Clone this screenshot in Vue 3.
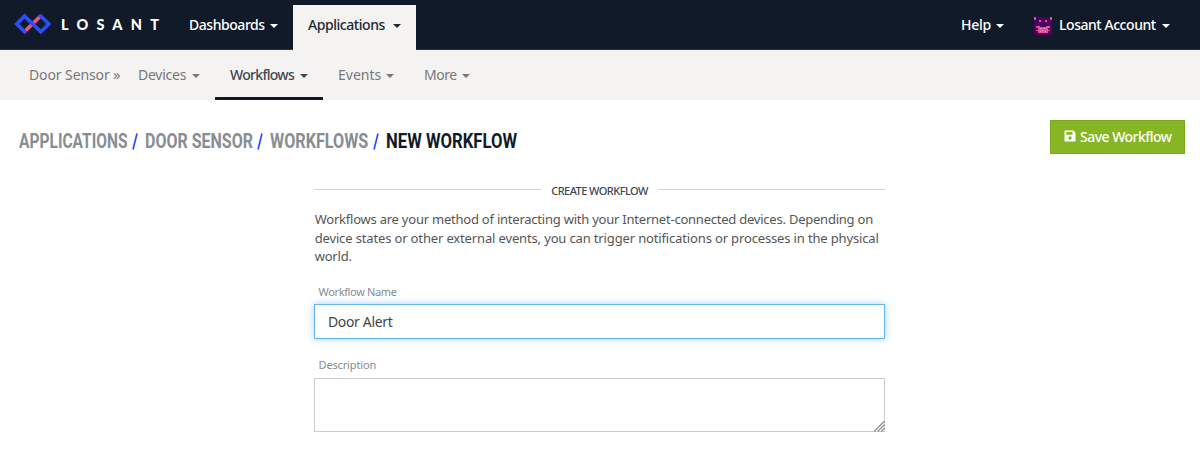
<script setup>
import { ref } from 'vue'

const name = ref('Door Alert')
const description = ref('')
const crumbs = [
  { label: 'Applications', width: 108, scale: 0.777 },
  { label: 'Door Sensor', width: 107, scale: 0.8 },
  { label: 'Workflows', width: 98, scale: 0.808 },
]
</script>

<template>
  <div class="page">
    <header class="navbar">
      <a class="brand">
        <svg class="mark" width="38" height="22" viewBox="0 0 38 22" fill="none" stroke-width="3.7">
          <path d="M10.5 18.8 26.8 2.8" stroke="#ee5384" />
          <path d="M12 20 2.8 11 10.5 3.2 26.8 18.8 34.8 11 25.6 2" stroke="#2b4bfc" stroke-linejoin="miter" />
        </svg>
        <span class="wordmark">LOSANT</span>
      </a>
      <nav class="main-nav">
        <a class="item dashboards"><span>Dashboards</span><i class="caret"></i></a>
        <a class="item applications"><span>Applications</span><i class="caret"></i></a>
      </nav>
      <nav class="main-nav right">
        <a class="item help"><span>Help</span><i class="caret"></i></a>
        <a class="item account">
          <svg class="avatar" width="18" height="18" viewBox="0 0 18 18" shape-rendering="crispEdges">
            <path fill="#4d0060" d="M0 0h18v18H0z" />
            <path fill="#e5528b" d="M0 0h2v3H0zM16 0h2v3h-2zM5 3h2v2H5zM11 3h2v2h-2zM2 9h4v1h6V9h4v2h-1v2h1v1h-2v2H4v-2H2v-1h2v-2H2z" />
            <path fill="#4d0060" d="M3 11h1v2H3zM14 11h1v2h-1z" />
            <path fill="#d8a3e6" d="M6 11h1v1H6zM10 11h1v1h-1zM8 13h1v1H8zM11 14h1v1h-1zM6 14h1v1H6z" />
          </svg>
          <span>Losant Account</span><i class="caret"></i>
        </a>
      </nav>
    </header>

    <nav class="subnav">
      <span class="context">Door Sensor »</span>
      <a class="sub devices"><span>Devices</span><i class="caret"></i></a>
      <a class="sub workflows"><span>Workflows</span><i class="caret"></i></a>
      <a class="sub events"><span>Events</span><i class="caret"></i></a>
      <a class="sub more"><span>More</span><i class="caret"></i></a>
    </nav>

    <div class="title-row">
      <h1 class="crumbs">
        <template v-for="c in crumbs" :key="c.label">
          <a class="crumb" :style="{ width: c.width + 'px' }"><span :style="{ transform: `scaleX(${c.scale})` }">{{ c.label }}</span></a>
          <svg class="slash" width="6" height="17" viewBox="0 0 6 17"><path d="M5 .5 1 16.5" stroke="#2b4bfc" stroke-width="1.7" /></svg>
        </template>
        <span class="crumb current"><span>New Workflow</span></span>
      </h1>
      <button class="save">
        <svg width="12" height="12" viewBox="0 0 12 12">
          <path fill="#fff" fill-rule="evenodd" d="M1.5.5h7.8L11.5 2.700v7.800a1 1 0 0 1-1 1h-9a1 1 0 0 1-1-1v-9a1 1 0 0 1 1-1zM2.300 2v2.700h6.200V2zM6 6.300a1.700 1.700 0 1 0 0 3.400 1.700 1.700 0 0 0 0-3.400z" />
        </svg>
        <span>Save Workflow</span>
      </button>
    </div>

    <form class="form">
      <h2 class="legend"><span>CREATE WORKFLOW</span></h2>
      <p class="intro">
        <span class="l1">Workflows are your method of interacting with your Internet-connected devices. Depending on</span><br>
        <span class="l2">device states or other external events, you can trigger notifications or processes in the physical</span><br>
        <span>world.</span>
      </p>
      <label for="name">Workflow Name</label>
      <input id="name" v-model="name" type="text">
      <label for="description" class="second">Description</label>
      <div class="area">
        <textarea id="description" v-model="description"></textarea>
        <svg class="grip" width="12" height="12" viewBox="0 0 12 12"><path d="M1 11.500 11.500 1M4.500 11.500l7-7M8 11.500l3.500-3.500" stroke="#8c8c8c" stroke-width="1.100" /></svg>
      </div>
    </form>
  </div>
</template>

<style>
body { background: #fff; }
</style>

<style scoped>
* { box-sizing: border-box; }
.page { width: 1200px; height: 470px; overflow: hidden; background: #fff; font-family: "Noto Sans", sans-serif; font-size: 14px; color: #555; }
.navbar { display: flex; height: 50px; background: #101a28; border-bottom: 1px solid #2b3440; color: #fff; }
.brand { display: flex; width: 174px; padding-left: 14px; }
.mark { margin-top: 13px; flex: none; }
.wordmark { margin-left: 9px; font: 900 14.5px/49px Lato, sans-serif; letter-spacing: 8.2px; }
.main-nav { display: flex; }
.right { margin-left: auto; margin-right: 15px; }
.item, .sub { display: flex; align-items: center; justify-content: space-between; padding: 0 15px 2px; white-space: nowrap; }
.item { height: 50px; font-weight: 500; letter-spacing: -.45px; }
.caret { flex: none; width: 8px; height: 4px; margin-top: 4px; background: currentColor; clip-path: polygon(0 0, 100% 0, 50% 100%); }
.dashboards { width: 119px; }
.applications { width: 123px; height: 45px; margin-top: 5px; padding-bottom: 7px; background: #f5f3f1; color: #222833; }
.help { width: 73px; letter-spacing: -.3px; }
.account { width: 166px; }
.avatar { margin-top: 4px; margin-right: 7px; flex: none; }
.account span { margin-right: auto; }
.subnav { display: flex; height: 50px; background: #f5f3f1; color: #77787a; padding-left: 29px; }
.context { width: 94px; line-height: 50px; white-space: nowrap; letter-spacing: -.1px; }
.devices { width: 92px; letter-spacing: -.25px; }
.workflows { width: 108px; color: #424750; border-bottom: 3px solid #101a28; padding-top: 1px; padding-bottom: 0; font-weight: 500; letter-spacing: -.7px; }
.events { width: 86px; }
.more { width: 76px; letter-spacing: -.5px; }
.title-row { display: flex; justify-content: space-between; align-items: flex-start; padding: 20px 15px 0 19px; height: 84px; }
.crumbs { display: flex; align-items: center; margin: 0; height: 43px; font: 700 20px/43px Roboto, sans-serif; text-transform: uppercase; white-space: nowrap; color: #878d93; }
.crumb > span { display: inline-block; transform: scaleX(.834); transform-origin: 0 50%; }
.crumb { flex: none; }
.current { color: #101a28; }
.slash { flex: none; margin: 0 7px 0 5px; }
.save { display: flex; align-items: center; width: 135px; height: 34px; padding: 0 13px; border: 1px solid #7aa81f; background: #86b624; color: #fff; font: 500 14px/32px "Noto Sans", sans-serif; letter-spacing: -.52px; white-space: nowrap; }
.save svg { margin: -2px 4px 0 0; flex: none; }
.form { width: 571px; margin-left: 314px; }
.legend { display: flex; align-items: center; gap: 10px; margin: 0; height: 14px; font-size: 11px; font-weight: 500; line-height: 14px; letter-spacing: -.55px; color: #3f4751; white-space: nowrap; }
.legend::before, .legend::after { content: ""; flex: 1; height: 1px; background: #d4d4da; margin-top: -3px; }
.intro { margin: 12px 0 0; padding-left: .7px; line-height: 18.5px; font-size: 13px; white-space: nowrap; height: 56px; letter-spacing: -.2px; }
.l1 { letter-spacing: -.228px; }
.l2 { letter-spacing: -.147px; }
label { display: block; margin: 18px 0 0 4.5px; font-size: 11px; line-height: 15px; padding-bottom: 1px; letter-spacing: -.35px; color: #858b92; }
.second { letter-spacing: -.15px; }
input { display: block; width: 571px; height: 35px; margin-top: 4px; padding: 0 13px; border: 1px solid #66b5f1; box-shadow: 0 0 7px rgba(102, 181, 241, .6); outline: none; background: #fff; font: 14px "Noto Sans", sans-serif; letter-spacing: -.35px; color: #444; }
.area { position: relative; height: 54px; margin-top: 5px; }
textarea { display: block; width: 571px; height: 54px; padding: 8px 13px; border: 1px solid #ccc; resize: none; outline: none; background: #fff; }
.grip { position: absolute; right: 0; bottom: 0; }
</style>
